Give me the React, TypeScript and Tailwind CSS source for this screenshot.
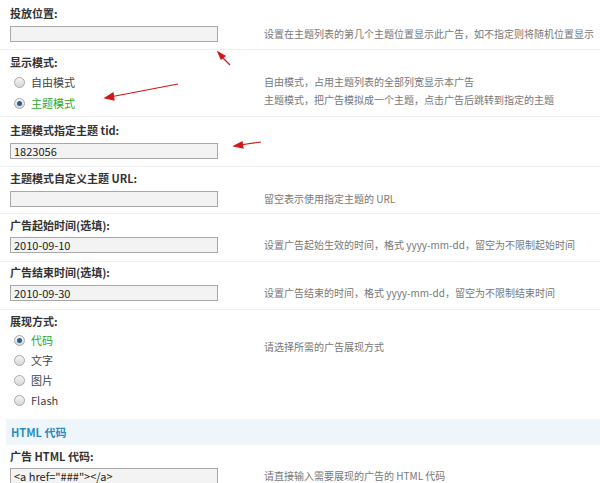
import React from 'react';

const F = { fontFamily: '"Noto Sans CJK SC", "DejaVu Sans", sans-serif' };

function Radio({ checked }: { checked?: boolean }) {
  return (
    <span className="inline-flex w-[11px] h-[11px] rounded-full border border-[#a9a9a9] bg-gradient-to-b from-[#f4f4f4] to-[#d8d8d8] items-center justify-center mr-[6px]">
      {checked && <span className="w-[5px] h-[5px] rounded-full bg-[#2b5f8a]" />}
    </span>
  );
}

function Input({ value, h = 16 }: { value?: string; h?: number }) {
  return (
    <div className="w-[208px] border border-[#a8a8a8] bg-[#f3f3f3] text-[11px] text-[#222] px-[3px] leading-[14px]" style={{ height: h }}>
      {value}
    </div>
  );
}

function Label({ children }: { children: React.ReactNode }) {
  return <div className="text-[11px] font-bold text-[#333] leading-[14px]">{children}</div>;
}

function Help({ children }: { children: React.ReactNode }) {
  return <div className="text-[10px] text-[#777] leading-[14px]">{children}</div>;
}

const row = 'flex items-center h-[14px] leading-[14px] text-[11px] pl-[4px]';

export default function App() {
  return (
    <div className="relative w-[600px] h-[483px] bg-white overflow-hidden" style={F}>
      {/* 投放位置 */}
      <div className="h-[50px] border-b border-[#eef0f2] pl-[10px] pt-[6px]">
        <Label>投放位置:</Label>
        <div className="flex items-center mt-[6px]">
          <Input />
          <div className="ml-[46px]"><Help>设置在主题列表的第几个主题位置显示此广告，如不指定则将随机位置显示</Help></div>
        </div>
      </div>
      {/* 显示模式 */}
      <div className="h-[67px] border-b border-[#eef0f2] pl-[10px] pt-[5px] flex">
        <div className="w-[254px]">
          <Label>显示模式:</Label>
          <div className={`${row} text-[#444] mt-[6px]`}><Radio />自由模式</div>
          <div className={`${row} text-[#2aa82a] mt-[7px]`}><Radio checked />主题模式</div>
        </div>
        <div className="pt-[20px] space-y-[4px]">
          <Help>自由模式，占用主题列表的全部列宽显示本广告</Help>
          <Help>主题模式，把广告模拟成一个主题，点击广告后跳转到指定的主题</Help>
        </div>
      </div>
      {/* tid */}
      <div className="h-[50px] border-b border-[#eef0f2] pl-[10px] pt-[6px]">
        <Label>主题模式指定主题 tid:</Label>
        <div className="mt-[6px]"><Input value="1823056" /></div>
      </div>
      {/* URL */}
      <div className="h-[47px] border-b border-[#eef0f2] pl-[10px] pt-[4px]">
        <Label>主题模式自定义主题 URL:</Label>
        <div className="flex items-center mt-[6px]">
          <Input />
          <div className="ml-[46px]"><Help>留空表示使用指定主题的 URL</Help></div>
        </div>
      </div>
      {/* start */}
      <div className="h-[48px] border-b border-[#eef0f2] pl-[10px] pt-[4px]">
        <Label>广告起始时间(选填):</Label>
        <div className="flex items-center mt-[5px]">
          <Input value="2010-09-10" />
          <div className="ml-[46px]"><Help>设置广告起始生效的时间，格式 yyyy-mm-dd，留空为不限制起始时间</Help></div>
        </div>
      </div>
      {/* end */}
      <div className="h-[48px] border-b border-[#eef0f2] pl-[10px] pt-[3px]">
        <Label>广告结束时间(选填):</Label>
        <div className="flex items-center mt-[6px]">
          <Input value="2010-09-30" />
          <div className="ml-[46px]"><Help>设置广告结束的时间，格式 yyyy-mm-dd，留空为不限制结束时间</Help></div>
        </div>
      </div>
      {/* 展现方式 */}
      <div className="h-[109px] pl-[10px] pt-[4px] flex">
        <div className="w-[254px]">
          <Label>展现方式:</Label>
          <div className={`${row} text-[#2aa82a] mt-[5px]`}><Radio checked />代码</div>
          <div className={`${row} text-[#444] mt-[6px]`}><Radio />文字</div>
          <div className={`${row} text-[#444] mt-[6px]`}><Radio />图片</div>
          <div className={`${row} text-[#444] mt-[6px]`}><Radio />Flash</div>
        </div>
        <div className="pt-[26px]"><Help>请选择所需的广告展现方式</Help></div>
      </div>
      {/* HTML header */}
      <div className="h-[26px] ml-[6px] bg-[#eef6fb] pl-[5px] flex items-center text-[11px] font-bold text-[#2a8cc4]">HTML 代码</div>
      <div className="pl-[10px] pt-[4px]">
        <Label>广告 HTML 代码:</Label>
        <div className="flex items-start mt-[5px]">
          <Input value={'<a href="###"></a>'} h={30} />
          <div className="ml-[46px] pt-[1px]"><Help>请直接输入需要展现的广告的 HTML 代码</Help></div>
        </div>
      </div>
      {/* red arrows */}
      <svg className="absolute inset-0 pointer-events-none" width="600" height="483">
        <g stroke="#d01818" strokeWidth="1.2" fill="#d01818">
          <line x1="230" y1="65" x2="220" y2="55" />
          <polygon points="218,52 225,56 221,59" />
          <line x1="178" y1="84" x2="110" y2="97" />
          <polygon points="105,98 113,93 114,100" />
          <line x1="261" y1="142" x2="240" y2="145" />
          <polygon points="234,146 242,142 243,148" />
        </g>
      </svg>
    </div>
  );
}
